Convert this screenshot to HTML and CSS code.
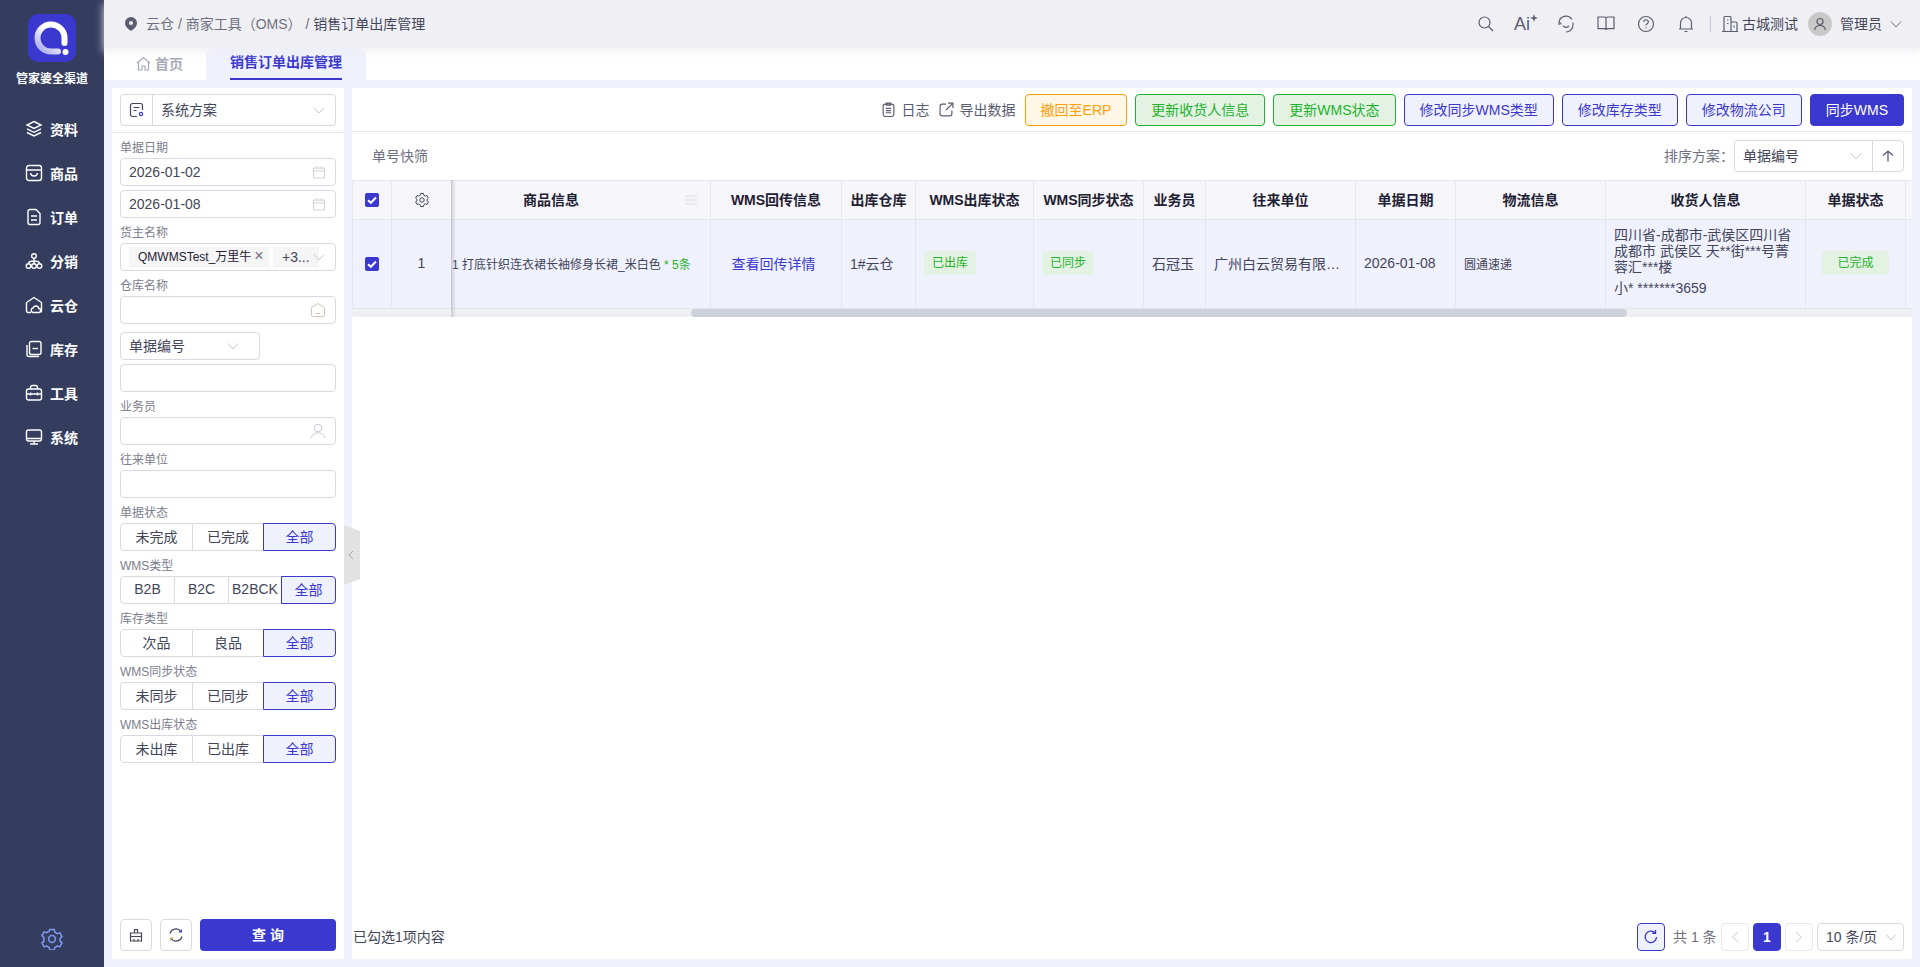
FILE: index.html
```html
<!DOCTYPE html>
<html lang="zh-CN">

<head>
    <meta charset="utf-8">
    <meta name="viewport" content="width=device-width, initial-scale=1.0">
    <title>销售订单出库管理</title>
    <link rel="stylesheet" href="styles.css">
</head>

<body>
    <svg class="defs" width="0" height="0">
        <symbol id="chev" viewBox="0 0 12 12"><path d="M1 3.500l5 5.500 5-5.500" fill="none" stroke="currentColor" stroke-width="1"/></symbol>
        <symbol id="cal" viewBox="0 0 14 14"><path d="M1.500 3h11v10h-11zM1.500 6h11M4.500 1v3M9.500 1v3" fill="none" stroke="currentColor" stroke-width="1"/></symbol>
        <symbol id="chk" viewBox="0 0 14 14"><rect width="14" height="14" rx="2" fill="#3b38d0"/><path d="M3 7.200l2.800 2.600L11 4.500" fill="none" stroke="#fff" stroke-width="2"/></symbol>
    </svg>

    <aside class="side">
        <svg class="logo" width="48" height="48" viewBox="0 0 48 48">
            <defs><linearGradient id="lg" x1="0.900" y1="0.100" x2="0.200" y2="0.900"><stop offset="0.400" stop-color="#fff"/><stop offset="1" stop-color="#b9b8ee"/></linearGradient></defs>
            <rect width="48" height="48" rx="10" fill="#3b38d0"/>
            <path d="M36.500 29V24A13.500 13.500 0 1 0 23.500 37.500H30" fill="none" stroke="url(#lg)" stroke-width="6" stroke-linecap="round"/>
            <circle cx="37.500" cy="38" r="3" fill="#fff"/>
        </svg>
        <div class="brand">管家婆全渠道</div>
        <nav class="menu">
            <a class="menu_item"><svg class="ic" viewBox="0 0 18 18"><path d="M9 1.500l7 3.500-7 3.500L2 5zM2 8.800l7 3.500 7-3.500M2 12.500L9 16l7-3.500"/></svg>资料</a>
            <a class="menu_item"><svg class="ic" viewBox="0 0 18 18"><rect x="1.500" y="1.500" width="15" height="15" rx="2.500"/><path d="M1.500 6h15M5.500 9c.5 4 6.500 4 7 0"/></svg>商品</a>
            <a class="menu_item"><svg class="ic" viewBox="0 0 18 18"><path d="M3 3.500a2 2 0 0 1 2-2h6l4 4v9a2 2 0 0 1-2 2H5a2 2 0 0 1-2-2zM6 8h6M6 12h6"/></svg>订单</a>
            <a class="menu_item"><svg class="ic" viewBox="0 0 18 18"><circle cx="9" cy="4" r="2.300"/><circle cx="3.500" cy="14" r="2.300"/><circle cx="9" cy="14" r="2.300"/><circle cx="14.500" cy="14" r="2.300"/><path d="M9 6.500v5M3.500 11.500c0-2 2-2.500 5.500-2.500s5.500.5 5.500 2.500"/></svg>分销</a>
            <a class="menu_item"><svg class="ic" viewBox="0 0 18 18"><path d="M6 16.500H3a1.500 1.500 0 0 1-1.500-1.500V6.500L9 1.500l7.500 5V15a1.500 1.500 0 0 1-.6 1.200M8 16.500h5.500a2 2 0 0 0 .3-4 3 3 0 0 0-5.800-.5 2.300 2.300 0 0 0 0 4.500z"/></svg>云仓</a>
            <a class="menu_item"><svg class="ic" viewBox="0 0 18 18"><path d="M2 5v9.500a2 2 0 0 0 2 2h10"/><rect x="4.500" y="1.500" width="11.500" height="13" rx="2"/><path d="M7.500 8.500h5.500"/></svg>库存</a>
            <a class="menu_item"><svg class="ic" viewBox="0 0 18 18"><rect x="1.500" y="5" width="15" height="11" rx="2"/><path d="M5.500 5V3.500a2 2 0 0 1 2-2h3a2 2 0 0 1 2 2V5M1.500 10h15M5.500 8.500v3M12.500 8.500v3"/></svg>工具</a>
            <a class="menu_item"><svg class="ic" viewBox="0 0 18 18"><rect x="1.500" y="2" width="15" height="11" rx="2"/><path d="M9 13v3M5 16h8M1.500 10.500h15"/></svg>系统</a>
        </nav>
        <svg class="side_gear" viewBox="0 0 22 22" fill="none" stroke="currentColor" stroke-width="1.500"><path d="M8.800 1.800h4.400l.7 2.600 2.400 1.400 2.600-.7 2.100 3.700-1.900 1.900v2.600l1.900 1.900-2.100 3.700-2.600-.7-2.400 1.400-.7 2.600H8.800l-.7-2.600-2.400-1.400-2.600.7-2.100-3.700 1.900-1.900V9.700L1 7.800l2.100-3.700 2.600.7 2.400-1.400z" transform="translate(0 -.2)"/><circle cx="11" cy="11" r="3.400"/></svg>
    </aside>

    <div class="wrap">
        <header class="top">
            <svg class="pin" width="12" height="14" viewBox="0 0 12 14"><path d="M6 0a6 6 0 0 0-6 6c0 3.500 3.500 6.500 6 8 2.500-1.500 6-4.500 6-8a6 6 0 0 0-6-6zm0 8a2 2 0 1 1 0-4 2 2 0 0 1 0 4z" fill="#5b5e70"/></svg>
            <div class="crumb">云仓 / 商家工具（OMS） / <span class="crumb_now">销售订单出库管理</span></div>
            <div class="tools">
                <span class="tool"><svg class="tic" viewBox="0 0 18 18"><circle cx="7.500" cy="7.500" r="5.500"/><path d="M11.500 11.500L16 16"/></svg></span>
                <span class="tool tool_ai">Ai<svg width="8" height="8" viewBox="0 0 8 8"><path d="M4 0l1 3 3 1-3 1-1 3-1-3-3-1 3-1z" fill="#5b5e70"/></svg></span>
                <span class="tool"><svg class="tic" viewBox="0 0 18 18"><path d="M2 10V8a7 7 0 0 1 13-3.500M16 7.500v2.500a7 7 0 0 1-7 7M2 7.500c1.500 0 2 1 2 2M6 11c1.500 1.700 4.500 1.700 6 0"/></svg></span>
                <span class="tool"><svg class="tic" viewBox="0 0 18 18"><path d="M1 2h6.500c1 0 1.500.5 1.500 1.500V15c0-.8-.7-1.300-1.500-1.300H1zM17 2h-6.500C9.500 2 9 2.500 9 3.500V15c0-.8.700-1.300 1.500-1.300H17z"/></svg></span>
                <span class="tool"><svg class="tic" viewBox="0 0 18 18"><circle cx="9" cy="9" r="7.500"/><path d="M6.800 7c0-3 4.500-3 4.500 0 0 1.800-2.300 1.800-2.300 3.500M9 12.300v1"/></svg></span>
                <span class="tool"><svg class="tic" viewBox="0 0 18 18"><path d="M3.500 14V8a5.500 5.500 0 0 1 11 0v6M2 14h14M7.500 16.500h3M9 1v1.500"/></svg></span>
            </div>
            <span class="top_line"></span>
            <svg class="tic org" viewBox="0 0 18 18"><path d="M3 16.500V2.500c0-.6.400-1 1-1h5c.6 0 1 .4 1 1v14M10 7h5c.6 0 1 .4 1 1v8.500M1 16.500h16M6 5h1.500M6 8.500h1.500M13 10.500v2"/></svg>
            <span class="org_name">古城测试</span>
            <span class="avatar"><svg width="14" height="14" viewBox="0 0 14 14" fill="none" stroke="#55586a" stroke-width="1.200"><circle cx="7" cy="4.500" r="3"/><path d="M1.800 13c.5-6 9.900-6 10.400 0"/></svg></span>
            <span class="user">管理员</span>
            <svg class="chev user_chev"><use href="#chev"/></svg>
        </header>

        <div class="tabs">
            <div class="tab">
                <svg width="15" height="15" viewBox="0 0 15 15" fill="none" stroke="currentColor" stroke-width="1.200"><path d="M1 7l6.500-5.500L14 7M2.500 6v8h3.500v-4h3v4h3.500V6"/></svg>
                首页
            </div>
            <div class="tab tab_on"><span>销售订单出库管理</span></div>
        </div>

        <main class="content">
            <section class="filter">
                <div class="scheme">
                    <div class="box box_scheme">
                        <span class="scheme_ic"><svg width="16" height="16" viewBox="0 0 16 16" fill="none" stroke="#43465a" stroke-width="1.200"><path d="M8 14.500H3.500a2 2 0 0 1-2-2v-9a2 2 0 0 1 2-2h8a2 2 0 0 1 2 2V8M4.500 5.500h6M4.500 8.500h3"/><circle cx="12" cy="12" r="1.600" stroke="#3b38d0"/></svg></span>
                        <span class="box_txt">系统方案</span>
                        <svg class="chev"><use href="#chev"/></svg>
                    </div>
                </div>
                <div class="fields">
                    <label class="lab">单据日期</label>
                    <div class="box"><span class="box_txt box_num">2026-01-02</span><svg class="cal"><use href="#cal"/></svg></div>
                    <div class="box box_next"><span class="box_txt box_num">2026-01-08</span><svg class="cal"><use href="#cal"/></svg></div>
                    <label class="lab">货主名称</label>
                    <div class="box box_tags">
                        <span class="chip chip_main">QMWMSTest_万里牛<i>×</i></span>
                        <span class="chip chip_more">+3...</span>
                        <svg class="chev chev_tags"><use href="#chev"/></svg>
                    </div>
                    <label class="lab">仓库名称</label>
                    <div class="box"><span class="box_txt"></span><svg class="fic" viewBox="0 0 16 16" fill="none" stroke="#d3c6b8" stroke-width="1"><path d="M1.500 5.500L8 1.500l6.500 4v7.500a1.500 1.500 0 0 1-1.500 1.500H3a1.500 1.500 0 0 1-1.500-1.500zM5.500 11.500h5"/></svg></div>
                    <div class="box box_type"><span class="box_txt">单据编号</span><svg class="chev"><use href="#chev"/></svg></div>
                    <div class="box box_next"></div>
                    <label class="lab">业务员</label>
                    <div class="box"><span class="box_txt"></span><svg class="fic" viewBox="0 0 16 16" fill="none" stroke="#c9cbd6" stroke-width="1"><circle cx="8" cy="5" r="3.800"/><path d="M1.500 15c.5-7 12.500-7 13 0"/></svg></div>
                    <label class="lab">往来单位</label>
                    <div class="box"></div>
                    <label class="lab">单据状态</label>
                    <div class="seg seg_3"><span>未完成</span><span>已完成</span><span class="seg_on">全部</span></div>
                    <label class="lab">WMS类型</label>
                    <div class="seg seg_4"><span>B2B</span><span>B2C</span><span>B2BCK</span><span class="seg_on">全部</span></div>
                    <label class="lab">库存类型</label>
                    <div class="seg seg_3"><span>次品</span><span>良品</span><span class="seg_on">全部</span></div>
                    <label class="lab">WMS同步状态</label>
                    <div class="seg seg_3"><span>未同步</span><span>已同步</span><span class="seg_on">全部</span></div>
                    <label class="lab">WMS出库状态</label>
                    <div class="seg seg_3"><span>未出库</span><span>已出库</span><span class="seg_on">全部</span></div>
                </div>
                <div class="filter_btns">
                    <button class="btn_ic"><svg width="14" height="14" viewBox="0 0 14 14" fill="none" stroke="#43465a" stroke-width="1.200"><path d="M5.500 5V1.500h3V5M1.500 5h11v8h-11zM1.500 8.500h11M5 13v-2M9 13v-2"/></svg></button>
                    <button class="btn_ic"><svg width="16" height="16" viewBox="0 0 16 16" fill="none" stroke-width="1.200"><path d="M2 6.500A6.200 6.200 0 0 1 13 4.500" stroke="#43465a"/><path d="M14 9.500A6.200 6.200 0 0 1 3 11.500" stroke="#43465a"/><path d="M13.300 2.500v2.300H11" stroke="#3b38d0"/><path d="M2.700 13.500v-2.300H5" stroke="#d39a4a"/></svg></button>
                    <button class="btn_query">查 询</button>
                </div>
            </section>

            <div class="handle"><svg width="6" height="10" viewBox="0 0 6 10" fill="none" stroke="#a9a9a9"><path d="M5 1L1 5l4 4"/></svg></div>

            <section class="main">
                <div class="bar">
                    <span class="link"><svg class="bar_ic" viewBox="0 0 14 14"><rect x="2" y="2" width="10" height="11.500" rx="2"/><path d="M5 1h4v2H5zM4.500 6h5M4.500 8h5M4.500 10h5"/></svg>日志</span>
                    <span class="link"><svg class="bar_ic" viewBox="0 0 14 14"><path d="M6.500 2H3a2 2 0 0 0-2 2v7a2 2 0 0 0 2 2h7a2 2 0 0 0 2-2V8M8.500 1H13v4.500M13 1L6.500 7.500"/></svg>导出数据</span>
                    <button class="btn btn_orange">撤回至ERP</button>
                    <button class="btn btn_green">更新收货人信息</button>
                    <button class="btn btn_green">更新WMS状态</button>
                    <button class="btn btn_blue">修改同步WMS类型</button>
                    <button class="btn btn_blue">修改库存类型</button>
                    <button class="btn btn_blue">修改物流公司</button>
                    <button class="btn btn_solid">同步WMS</button>
                </div>

                <div class="sort">
                    <span class="sort_tit">单号快筛</span>
                    <span class="sort_lab">排序方案：</span>
                    <div class="box box_sort"><span class="box_txt">单据编号</span><svg class="chev"><use href="#chev"/></svg></div>
                    <div class="box box_up"><svg width="12" height="12" viewBox="0 0 12 12" fill="none" stroke="#5b5e70" stroke-width="1.300"><path d="M6 11.500V1M1 5.500L6 1l5 4.500"/></svg></div>
                </div>

                <div class="grid">
                    <table>
                        <colgroup>
                            <col class="c40"><col class="c60"><col class="c259"><col class="c131"><col class="c74"><col class="c118"><col class="c110"><col class="c62"><col class="c150"><col class="c100"><col class="c150"><col class="c200"><col class="c100"><col class="c6">
                        </colgroup>
                        <thead>
                            <tr>
                                <th class="th_check"><svg class="check"><use href="#chk"/></svg></th>
                                <th><svg class="gear" viewBox="0 0 14 14" fill="none" stroke="#43465a" stroke-width="1"><path d="M5.600 1h2.800l.4 1.700 1.500.9 1.700-.5 1.400 2.400-1.200 1.200v1.600l1.200 1.200-1.400 2.400-1.700-.5-1.500.9-.4 1.700H5.600l-.4-1.700-1.500-.9-1.700.5L.6 9.500l1.200-1.200V6.700L.6 5.500 2 3.100l1.700.5 1.500-.9z" transform="translate(0 -.5)"/><circle cx="7" cy="7" r="2.200"/></svg></th>
                                <th class="th_goods">商品信息<svg class="drag" width="12" height="10" viewBox="0 0 12 10" stroke="#dcdce2"><path d="M0 1h12M0 5h12M0 9h12"/></svg></th>
                                <th>WMS回传信息</th>
                                <th>出库仓库</th>
                                <th>WMS出库状态</th>
                                <th>WMS同步状态</th>
                                <th>业务员</th>
                                <th>往来单位</th>
                                <th>单据日期</th>
                                <th>物流信息</th>
                                <th>收货人信息</th>
                                <th>单据状态</th>
                                <th></th>
                            </tr>
                        </thead>
                        <tbody>
                            <tr>
                                <td class="mid td_check"><svg class="check"><use href="#chk"/></svg></td>
                                <td class="mid">1</td>
                                <td class="goods">1 打底针织连衣裙长袖修身长裙_米白色 <em>* 5条</em></td>
                                <td class="mid td_detail"><a class="detail">查看回传详情</a></td>
                                <td>1#云仓</td>
                                <td><span class="tag">已出库</span></td>
                                <td><span class="tag">已同步</span></td>
                                <td>石冠玉</td>
                                <td>广州白云贸易有限…</td>
                                <td>2026-01-08</td>
                                <td class="small">圆通速递</td>
                                <td class="addr">四川省-成都市-武侯区四川省成都市 武侯区 天**街***号菁蓉汇***楼<p>小* *******3659</p></td>
                                <td class="mid"><span class="tag tag_wide">已完成</span></td>
                                <td></td>
                            </tr>
                        </tbody>
                    </table>
                    <div class="scroll"><div class="thumb"></div></div>
                    <div class="frozen"></div>
                </div>

                <div class="foot">
                    <span class="foot_sel">已勾选1项内容</span>
                    <span class="pg pg_refresh"><svg width="16" height="16" viewBox="0 0 16 16" fill="none" stroke="#3b38d0" stroke-width="1.300"><path d="M13.500 8A5.700 5.700 0 1 1 12 4M12.500 1v3.300H9.200"/></svg></span>
                    <span class="pg_total">共 1 条</span>
                    <span class="pg"><svg width="8" height="12" viewBox="0 0 8 12" fill="none" stroke="#c9cbd6"><path d="M7 1L1.500 6 7 11"/></svg></span>
                    <span class="pg pg_on">1</span>
                    <span class="pg"><svg width="8" height="12" viewBox="0 0 8 12" fill="none" stroke="#c9cbd6"><path d="M1 1l5.500 5L1 11"/></svg></span>
                    <div class="box box_size"><span class="box_txt">10 条/页</span><svg class="chev"><use href="#chev"/></svg></div>
                </div>
            </section>
        </main>
    </div>
</body>

</html>
```

FILE: styles.css
```css
* {
    box-sizing: border-box;
}

body {
    margin: 0;
    width: 1920px;
    height: 967px;
    display: flex;
    overflow: hidden;
    font-family: "Liberation Sans", "Noto Sans CJK SC", sans-serif;
    font-size: 14px;
    color: #43465a;
    background-color: #fff;
}

.defs {
    position: absolute;
}

/* venstre menu */
.side {
    width: 104px;
    flex-shrink: 0;
    display: flex;
    flex-direction: column;
    align-items: center;
    padding: 14px 0 17px;
    background-color: #353d5f;
    color: #fff;
}

.brand {
    margin-top: 9px;
    font-size: 12px;
    line-height: 16px;
    font-weight: 700;
}

.menu {
    width: 100%;
    margin-top: 21px;
}

.menu_item {
    height: 44px;
    display: flex;
    align-items: center;
    gap: 7px;
    padding: 0 0 2px 25px;
    font-weight: 700;
}

.ic {
    width: 18px;
    height: 18px;
    fill: none;
    stroke: currentColor;
    stroke-width: 1.4;
}

.side_gear {
    width: 22px;
    height: 22px;
    margin-top: auto;
    color: #7f9cf5;
}

.wrap {
    flex: 1;
    min-width: 0;
    display: flex;
    flex-direction: column;
}

/* top */
.top {
    height: 48px;
    flex-shrink: 0;
    display: flex;
    align-items: center;
    padding-left: 21px;
    background-color: #f0f0f4;
    box-shadow: 0 4px 8px rgba(240, 240, 244, 0.9);
    position: relative;
    z-index: 1;
}

.crumb {
    margin-left: 9px;
    padding-bottom: 2px;
    color: #6e7080;
}

.crumb_now {
    color: #43465a;
}

.tools {
    display: flex;
    margin-left: auto;
}

.tool {
    width: 40px;
    display: flex;
    justify-content: center;
    align-items: center;
}

.tic {
    width: 18px;
    height: 18px;
    fill: none;
    stroke: #5b5e70;
    stroke-width: 1.2;
}

.tool_ai {
    font-size: 18px;
    line-height: 20px;
    color: #5b5e70;
}

.tool_ai svg {
    margin-top: -12px;
}

.top_line {
    width: 1px;
    height: 16px;
    margin: 0 10px 0 4px;
    background-color: #c4c8e4;
}

.org_name {
    margin-left: 3px;
    padding-bottom: 2px;
}

.avatar {
    width: 24px;
    height: 24px;
    margin-left: 10px;
    border-radius: 50%;
    display: flex;
    justify-content: center;
    align-items: center;
    background-color: #c9c9c9;
}

.user {
    margin-left: 8px;
    padding-bottom: 2px;
}

.chev {
    width: 12px;
    height: 12px;
    flex-shrink: 0;
    color: #c4c6d0;
}

.user_chev {
    margin: 0 18px 0 8px;
    color: #6e7080;
}

/* faner */
.tabs {
    height: 32px;
    flex-shrink: 0;
    display: flex;
    padding-left: 32px;
}

.tab {
    width: 70px;
    display: flex;
    align-items: center;
    gap: 4px;
    padding-bottom: 2px;
    font-weight: 700;
    color: #a8abb8;
}

.tab_on {
    width: 160px;
    justify-content: center;
    padding-bottom: 0;
    border-radius: 8px 8px 0 0;
    background-color: #eff1fd;
    color: #3b38d0;
}

.tab_on span {
    height: 32px;
    line-height: 28px;
    border-bottom: 2px solid #3b38d0;
}

.content {
    flex: 1;
    min-height: 0;
    display: flex;
    gap: 8px;
    padding: 8px;
    background-color: #eff1fd;
    position: relative;
}

/* filter */
.filter {
    width: 232px;
    flex-shrink: 0;
    display: flex;
    flex-direction: column;
    padding-bottom: 8px;
    background-color: #fff;
}

.scheme {
    padding: 6px 8px;
    border-bottom: 1px solid #e6e6ec;
}

.fields {
    padding: 0 8px;
}

.lab {
    display: block;
    height: 25px;
    padding-top: 7px;
    font-size: 12px;
    line-height: 17px;
    white-space: nowrap;
    color: #7b7d8e;
}

.box {
    height: 28px;
    display: flex;
    align-items: center;
    padding: 0 9px 0 8px;
    border: 1px solid #d9d9e3;
    border-radius: 4px;
    background-color: #fff;
}

.box_next {
    margin-top: 4px;
}

.box_txt {
    flex: 1;
    padding-bottom: 2px;
    white-space: nowrap;
}

.box_num {
    padding-bottom: 0;
}

.box_scheme {
    height: 32px;
    padding: 0 10px 0 0;
}

.scheme_ic {
    width: 32px;
    height: 30px;
    margin-right: 8px;
    display: flex;
    justify-content: center;
    align-items: center;
    border-right: 1px solid #d9d9e3;
}

.cal {
    width: 14px;
    height: 14px;
    color: #d0d1da;
    flex-shrink: 0;
}

.fic {
    width: 16px;
    height: 16px;
    flex-shrink: 0;
}

.box_tags {
    gap: 4px;
    position: relative;
}

.chip {
    height: 20px;
    line-height: 20px;
    padding-left: 9px;
    font-size: 12px;
    white-space: nowrap;
    background-color: #f5f5f5;
    color: #1e2033;
}

.chip i {
    margin-left: 3px;
    font-size: 16px;
    line-height: 14px;
    font-style: normal;
    color: #6e7080;
}

.chip_main {
    width: 140px;
}

.chip_more {
    width: 46px;
    font-size: 14px;
    color: #43465a;
}

.chev_tags {
    position: absolute;
    right: 10px;
    top: 7px;
}

.box_type {
    width: 140px;
    margin-top: 8px;
    padding-right: 20px;
}

.seg {
    height: 28px;
    display: grid;
}

.seg_3 {
    grid-template-columns: 73px 71px 72px;
}

.seg_4 {
    grid-template-columns: 55px 54px 53px 54px;
}

.seg span {
    display: flex;
    justify-content: center;
    align-items: center;
    padding-bottom: 2px;
    white-space: nowrap;
    border: 1px solid #d9d9e3;
    border-left: none;
}

.seg span:first-child {
    border-left: 1px solid #d9d9e3;
    border-radius: 4px 0 0 4px;
}

.seg .seg_on {
    margin-left: -1px;
    border: 1px solid #3b38d0;
    border-radius: 0 4px 4px 0;
    background-color: #eff1fd;
    color: #3b38d0;
}

.filter_btns {
    display: flex;
    gap: 8px;
    margin-top: auto;
    padding: 0 8px;
}

.btn_ic {
    width: 32px;
    height: 32px;
    padding: 0;
    display: flex;
    justify-content: center;
    align-items: center;
    border: 1px solid #d9d9e3;
    border-radius: 4px;
    background-color: #fff;
}

.btn_query {
    flex: 1;
    height: 32px;
    padding: 0 0 2px;
    border: none;
    border-radius: 4px;
    font-family: inherit;
    font-size: 14px;
    font-weight: 700;
    background-color: #3b38d0;
    color: #fff;
}

.handle {
    position: absolute;
    left: 240px;
    top: 445px;
    width: 16px;
    height: 60px;
    display: flex;
    justify-content: flex-start;
    align-items: center;
    padding-left: 4px;
    clip-path: polygon(0 0, 100% 6px, 100% 54px, 0 100%);
    background-color: #e2e2e2;
}

/* indhold */
.main {
    flex: 1;
    min-width: 0;
    display: flex;
    flex-direction: column;
    background-color: #fff;
}

.bar {
    height: 44px;
    flex-shrink: 0;
    display: flex;
    justify-content: flex-end;
    align-items: center;
    gap: 8px;
    padding: 0 8px;
    border-bottom: 1px solid #e6e6ec;
}

.link {
    display: flex;
    align-items: center;
    gap: 6px;
    margin-right: 1px;
    padding-bottom: 1px;
    color: #5a5d70;
}

.bar_ic {
    width: 15px;
    height: 15px;
    fill: none;
    stroke: #5b5e70;
    stroke-width: 1.1;
}

.btn {
    height: 32px;
    padding: 0 15px 2px;
    border: 1px solid;
    border-radius: 4px;
    font-family: inherit;
    font-size: 14px;
    white-space: nowrap;
}

.btn_orange {
    border-color: #ff9d0a;
    background-color: #fff7e6;
    color: #ff9d0a;
}

.btn_green {
    border-color: #1fb32b;
    background-color: #e4f2e4;
    color: #1fb32b;
}

.btn_blue {
    border-color: #3b38d0;
    background-color: #eff1fd;
    color: #3b38d0;
}

.btn_solid {
    border-color: #3b38d0;
    background-color: #3b38d0;
    color: #fff;
}

.sort {
    height: 48px;
    flex-shrink: 0;
    display: flex;
    align-items: center;
    padding: 0 8px 0 20px;
}

.sort_tit {
    padding-bottom: 2px;
    color: #6e7080;
}

.sort_lab {
    margin-left: auto;
    padding-bottom: 2px;
    color: #6e7080;
}

.box_sort {
    width: 139px;
    height: 32px;
    padding-right: 10px;
    border-radius: 4px 0 0 4px;
}

.box_up {
    width: 32px;
    height: 32px;
    margin-left: -1px;
    justify-content: center;
    padding: 0;
    border-radius: 0 4px 4px 0;
}

/* tabel */
.grid {
    position: relative;
}

table {
    width: 1560px;
    table-layout: fixed;
    border-collapse: separate;
    border-spacing: 0;
}

.c40 { width: 40px; }
.c60 { width: 60px; }
.c259 { width: 259px; }
.c131 { width: 131px; }
.c74 { width: 74px; }
.c118 { width: 118px; }
.c110 { width: 110px; }
.c62 { width: 62px; }
.c150 { width: 150px; }
.c100 { width: 100px; }
.c200 { width: 200px; }
.c6 { width: 6px; }

th {
    height: 40px;
    padding: 0 0 2px;
    border-top: 1px solid #e6e6ec;
    border-bottom: 1px solid #e6e6ec;
    border-right: 1px solid #e6e6ec;
    font-size: 14px;
    font-weight: 700;
    white-space: nowrap;
    background-color: #f6f6fa;
    color: #1e2033;
}

th:first-child,
td:first-child {
    border-left: 1px solid #e6e6ec;
}

th:last-child,
td:last-child {
    border-right: none;
}

td {
    height: 89px;
    padding: 0 8px 2px;
    border-bottom: 1px solid #e6e6ec;
    border-right: 1px solid #e6e6ec;
    white-space: nowrap;
    background-color: #eff1fd;
}

.mid {
    text-align: center;
    padding: 0 0 2px;
}

.th_check,
.td_check {
    padding: 0;
}

.td_detail {
    padding-right: 5px;
}

.check {
    display: block;
    width: 14px;
    height: 14px;
    margin: 0 auto;
}

.gear {
    width: 14px;
    height: 14px;
    vertical-align: middle;
}

.th_goods {
    position: relative;
    padding-right: 60px;
}

.drag {
    position: absolute;
    right: 13px;
    top: 14px;
}

.goods {
    padding: 0 0 2px;
    font-size: 12px;
}

.goods em {
    font-style: normal;
    color: #1fb32b;
}

.detail {
    color: #3b38d0;
}

.tag {
    display: inline-block;
    height: 24px;
    line-height: 24px;
    padding: 0 8px;
    border-radius: 2px;
    font-size: 12px;
    background-color: #e4f2e4;
    color: #1fb32b;
}

.tag_wide {
    padding: 0 15px;
}

.small {
    font-size: 12px;
}

.addr {
    padding-bottom: 5px;
    line-height: 16px;
    white-space: normal;
    word-break: break-all;
}

.addr p {
    margin: 5px 0 0;
}

.scroll {
    height: 8px;
    background-color: #f0f0f4;
}

.thumb {
    width: 936px;
    height: 8px;
    margin-left: 339px;
    border-radius: 4px;
    background-color: #cdd2da;
}

.frozen {
    position: absolute;
    left: 99px;
    top: 0;
    bottom: 0;
    width: 5px;
    background: linear-gradient(to right, rgba(120, 120, 130, 0.3), rgba(120, 120, 130, 0));
}

/* bund */
.foot {
    display: flex;
    align-items: center;
    gap: 4px;
    margin-top: auto;
    padding: 0 8px 8px 1px;
}

.foot_sel {
    margin-right: auto;
    padding-bottom: 2px;
}

.pg {
    width: 28px;
    height: 28px;
    display: flex;
    justify-content: center;
    align-items: center;
    border: 1px solid #e6e6ec;
    border-radius: 4px;
}

.pg_refresh {
    border-color: #3b38d0;
    background-color: #eff1fd;
}

.pg_total {
    margin-left: 4px;
    width: 44px;
    padding-bottom: 2px;
    white-space: nowrap;
    color: #6e7080;
}

.pg_on {
    border-color: #3b38d0;
    background-color: #3b38d0;
    font-weight: 700;
    color: #fff;
}

.box_size {
    width: 87px;
    padding-right: 6px;
}
```
